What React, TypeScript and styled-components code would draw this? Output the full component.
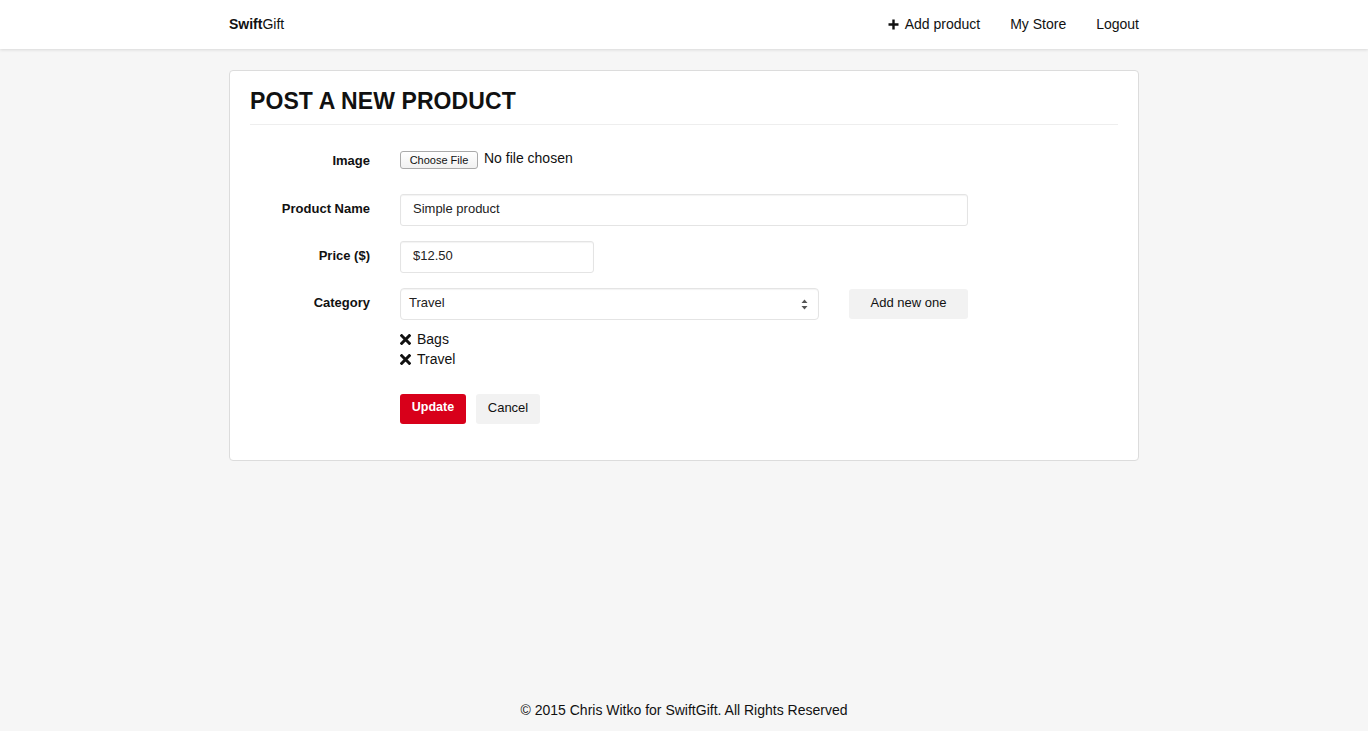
import React from "react";
import styled, { createGlobalStyle } from "styled-components";

const Global = createGlobalStyle`
  html, body { margin: 0; padding: 0; }
  body {
    background: #f6f6f6;
    font-family: "Liberation Sans", Arial, Helvetica, sans-serif;
    color: #111;
  }
  * { box-sizing: border-box; }
`;

const Page = styled.div`
  min-height: 731px;
  display: flex;
  flex-direction: column;
`;

const NavBar = styled.header`
  height: 49px;
  background: #fff;
  box-shadow: 0 1px 3px rgba(0, 0, 0, 0.12);
  display: flex;
  justify-content: center;
`;

const NavInner = styled.div`
  width: 910px;
  display: flex;
  align-items: center;
  justify-content: space-between;
  padding-bottom: 1px;
`;

const Brand = styled.div`
  font-size: 14px;
  color: #111;
  b { font-weight: bold; }
`;

const NavLinks = styled.nav`
  display: flex;
  gap: 30px;
  align-items: center;
`;

const NavLink = styled.a`
  font-size: 14px;
  color: #111;
  text-decoration: none;
  display: flex;
  align-items: center;
  gap: 6px;
`;

const Main = styled.main`
  width: 910px;
  margin: 0 auto;
  padding-top: 21px;
`;

const Panel = styled.section`
  background: #fff;
  border: 1px solid #dcdcdc;
  border-radius: 4px;
  padding: 17px 20px 36px;
`;

const Title = styled.h1`
  margin: 0;
  font-size: 23px;
  line-height: 26px;
  font-weight: bold;
  color: #111;
  padding-bottom: 10px;
  border-bottom: 1px solid #eeeeee;
  letter-spacing: 0.1px;
`;

const Form = styled.form`
  padding-top: 19px;
  display: flex;
  flex-direction: column;
`;

const Row = styled.div<{ $gap?: number }>`
  display: grid;
  grid-template-columns: 120px 568px;
  column-gap: 30px;
  align-items: center;
  margin-bottom: ${(p) => p.$gap ?? 15}px;
`;

const Label = styled.label<{ $raise?: number }>`
  font-size: 13px;
  font-weight: bold;
  text-align: right;
  color: #111;
  padding-bottom: ${(p) => p.$raise ?? 4}px;
`;

const FileField = styled.div`
  display: flex;
  align-items: center;
  height: 32px;
  gap: 6px;
`;

const FileButton = styled.span`
  height: 18px;
  width: 78px;
  border: 1px solid #aaa;
  border-radius: 3px;
  background: linear-gradient(#fff, #f1f1f1);
  font-size: 11px;
  display: flex;
  align-items: center;
  justify-content: center;
  color: #111;
`;

const FileText = styled.span`
  font-size: 14px;
  color: #111;
  margin-top: -4px;
`;

const TextInput = styled.div<{ $w: number }>`
  width: ${(p) => p.$w}px;
  height: 32px;
  border: 1px solid #e4e4e4;
  border-radius: 3px;
  box-shadow: inset 0 1px 1px rgba(0, 0, 0, 0.05);
  padding: 0 12px 4px;
  display: flex;
  align-items: center;
  font-size: 13px;
  color: #222;
`;

const CategoryLine = styled.div`
  display: flex;
  gap: 30px;
  align-items: center;
`;

const Select = styled.div`
  width: 419px;
  height: 32px;
  border: 1px solid #e4e4e4;
  border-radius: 4px;
  box-shadow: inset 0 1px 1px rgba(0, 0, 0, 0.05);
  padding: 0 8px 4px;
  display: flex;
  align-items: center;
  justify-content: space-between;
  font-size: 13px;
  color: #222;
`;

const Arrows = styled.svg`
  width: 7px;
  height: 11px;
  margin-right: 2px;
  margin-top: 4px;
`;

const GreyButton = styled.button<{ $w: number; $h: number }>`
  width: ${(p) => p.$w}px;
  height: ${(p) => p.$h}px;
  border: none;
  border-radius: 3px;
  background: #f2f2f2;
  font-family: inherit;
  font-size: 13px;
  color: #111;
  padding: 0 0 4px;
`;

const RedButton = styled.button`
  width: 66px;
  height: 30px;
  border: none;
  border-radius: 3px;
  background: #d8001a;
  color: #fff;
  font-family: inherit;
  font-size: 12.5px;
  font-weight: bold;
  padding: 0 0 4px;
`;

const TagList = styled.div`
  display: flex;
  flex-direction: column;
  margin-top: 9px;
`;

const Tag = styled.div`
  display: flex;
  align-items: center;
  gap: 6px;
  font-size: 14px;
  line-height: 20px;
  color: #111;
`;

const Actions = styled.div`
  display: flex;
  gap: 10px;
  margin-top: 25px;
`;

const Footer = styled.footer`
  margin-top: auto;
  text-align: center;
  font-size: 14px;
  color: #111;
  padding-bottom: 13px;
`;

const Cross = () => (
  <svg width="11" height="11" viewBox="0 0 11 11">
    <path d="M1.7 1.7 L9.3 9.3 M9.3 1.7 L1.7 9.3" stroke="#111" strokeWidth="3" strokeLinecap="square" />
  </svg>
);

const Plus = () => (
  <svg width="11" height="11" viewBox="0 0 11 11">
    <path d="M5.5 0.5 V10.5 M0.5 5.5 H10.5" stroke="#111" strokeWidth="2.4" />
  </svg>
);

export default function App() {
  return (
    <Page>
      <Global />
      <NavBar>
        <NavInner>
          <Brand>
            <b>Swift</b>Gift
          </Brand>
          <NavLinks>
            <NavLink href="#">
              <Plus />
              Add product
            </NavLink>
            <NavLink href="#">My Store</NavLink>
            <NavLink href="#">Logout</NavLink>
          </NavLinks>
        </NavInner>
      </NavBar>
      <Main>
        <Panel>
          <Title>POST A NEW PRODUCT</Title>
          <Form>
            <Row $gap={18}>
              <Label $raise={0}>Image</Label>
              <FileField>
                <FileButton>Choose File</FileButton>
                <FileText>No file chosen</FileText>
              </FileField>
            </Row>
            <Row>
              <Label>Product Name</Label>
              <TextInput $w={568}>Simple product</TextInput>
            </Row>
            <Row>
              <Label>Price ($)</Label>
              <TextInput $w={194}>$12.50</TextInput>
            </Row>
            <Row $gap={0}>
              <Label>Category</Label>
              <CategoryLine>
                <Select>
                  Travel
                  <Arrows viewBox="0 0 7 11">
                    <path d="M3.5 0.5 L6.5 4 H0.5 Z M3.5 10.5 L6.5 7 H0.5 Z" fill="#555" />
                  </Arrows>
                </Select>
                <GreyButton $w={119} $h={30} type="button">
                  Add new one
                </GreyButton>
              </CategoryLine>
            </Row>
            <Row $gap={0}>
              <span />
              <TagList>
                <Tag>
                  <Cross />
                  Bags
                </Tag>
                <Tag>
                  <Cross />
                  Travel
                </Tag>
              </TagList>
            </Row>
            <Row $gap={0}>
              <span />
              <Actions>
                <RedButton type="button">Update</RedButton>
                <GreyButton $w={64} $h={30} type="button">
                  Cancel
                </GreyButton>
              </Actions>
            </Row>
          </Form>
        </Panel>
      </Main>
      <Footer>© 2015 Chris Witko for SwiftGift. All Rights Reserved</Footer>
    </Page>
  );
}
